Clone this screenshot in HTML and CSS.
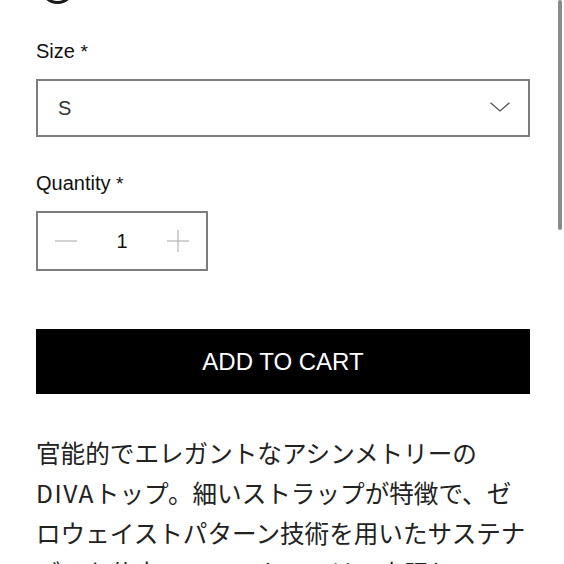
FILE: index.html
```html
<!DOCTYPE html>
<html lang="ja">
<head>
<meta charset="utf-8">
<title>Product</title>
<link rel="stylesheet" href="styles.css">
</head>
<body>
<div class="page">
  <div class="swatch"></div>
  <div class="field">
    <label class="label">Size <span class="req">*</span></label>
    <div class="select">
      <span class="select-value">S</span>
      <svg class="chevron" width="20" height="10" viewBox="0 0 20 10"><polyline points="0.5,0.8 10,9 19.5,0.8" fill="none" stroke="#555" stroke-width="1.3"/></svg>
    </div>
  </div>
  <div class="field qty-field">
    <label class="label">Quantity <span class="req">*</span></label>
    <div class="qty">
      <svg class="qty-icon" width="22" height="22" viewBox="0 0 22 22"><line x1="0" y1="11" x2="22" y2="11" stroke="#b5b5b5" stroke-width="1.2"/></svg>
      <span class="qty-value">1</span>
      <svg class="qty-icon" width="22" height="22" viewBox="0 0 22 22"><line x1="0" y1="11" x2="22" y2="11" stroke="#b5b5b5" stroke-width="1.2"/><line x1="11" y1="0" x2="11" y2="22" stroke="#b5b5b5" stroke-width="1.2"/></svg>
    </div>
  </div>
  <button class="cart">ADD TO CART</button>
  <p class="desc">官能的でエレガントなアシンメトリーの<span class="latin">DIVA</span>トップ。細いストラップが特徴で、ゼロウェイストパターン技術を用いたサステナブルな仕立て。このカラーは一点限り。</p>
</div>
<div class="scrollbar"></div>
</body>
</html>
```
FILE: styles.css
```css
html, body {
  margin: 0;
  padding: 0;
  background: #fff;
  overflow: hidden;
}
body {
  font-family: "Liberation Sans", Arial, sans-serif;
  color: #111;
}
.page {
  width: 494px;
  padding-left: 36px;
}
.swatch {
  width: 29px;
  height: 29px;
  margin-left: 4px;
  margin-top: -31px;
  border: 3px solid #1a1a1a;
  border-radius: 50%;
}
.field {
  margin-top: 35px;
}
.qty-field {
  margin-top: 34px;
}
.label {
  display: block;
  font-size: 20px;
  line-height: 24px;
  color: #111;
}
.req {
  font-size: 19px;
}
.select {
  margin-top: 15px;
  height: 54px;
  border: 2px solid #7d7d7d;
  display: flex;
  align-items: center;
  justify-content: space-between;
  padding: 0 18px 0 20px;
}
.select-value {
  font-size: 20px;
  color: #333;
}
.chevron {
  display: block;
  margin-top: -2px;
}
.qty {
  margin-top: 15px;
  width: 134px;
  height: 56px;
  border: 2px solid #7d7d7d;
  display: flex;
  align-items: center;
  justify-content: space-between;
  padding: 0 17px;
}
.qty-icon {
  display: block;
}
.qty-value {
  font-size: 20px;
  color: #111;
}
.cart {
  display: block;
  margin-top: 58px;
  width: 494px;
  height: 65px;
  border: 0;
  background: #000;
  color: #fff;
  font-family: "Liberation Sans", Arial, sans-serif;
  font-size: 24px;
  padding: 0;
}
.desc {
  margin: 38px 0 0;
  font-family: "Noto Sans CJK JP", sans-serif;
  font-size: 24.6px;
  line-height: 40px;
  color: #222;
}
.latin {
  letter-spacing: 1.5px;
}
.scrollbar {
  position: fixed;
  top: 0;
  right: 2px;
  width: 4px;
  height: 230px;
  background: #8a8a8a;
  border-radius: 2px;
}
```
